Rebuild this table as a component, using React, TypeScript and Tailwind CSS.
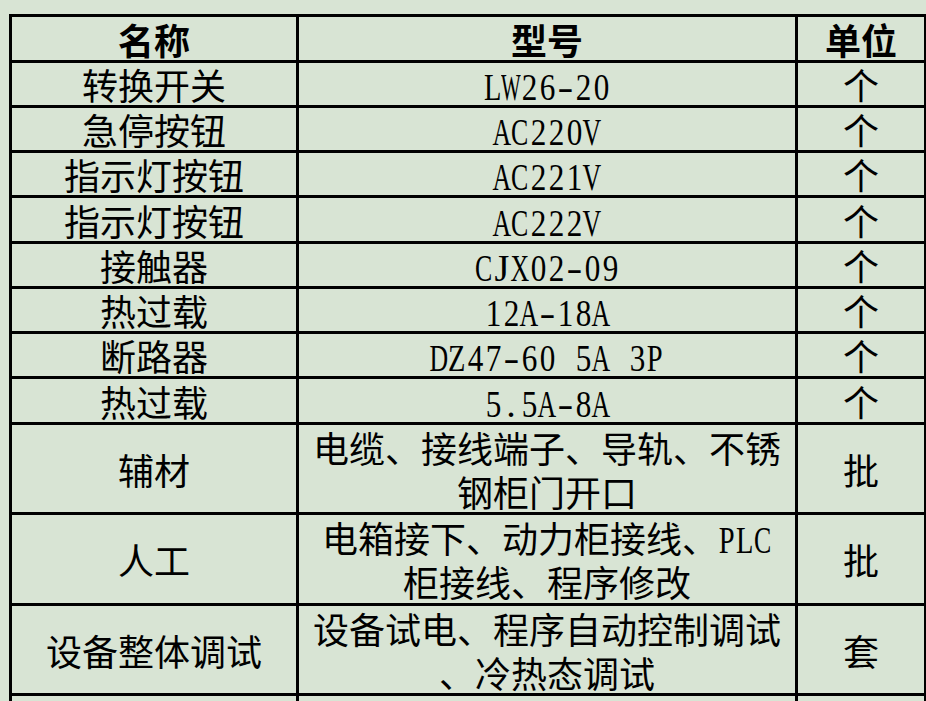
import React from "react";

function sx(c: string): string {
  if (/[0-9]/.test(c)) return "scale-x-[0.82]";
  if (c === "W") return "scale-x-[0.55]";
  if ("AVXDC".includes(c)) return "scale-x-[0.68]";
  if ("LZP".includes(c)) return "scale-x-[0.75]";
  if (c === "-") return "scale-x-[1.25]";
  return "scale-x-100";
}

function L({ t }: { t: string }) {
  return (
    <span className="font-['Liberation_Serif',serif] text-[38px] leading-[36px] align-baseline">
      {t.split("").map((c, i) => (
        <span key={i} className="inline-flex w-[18px] justify-center align-baseline">
          <span className={`inline-block shrink-0 ${sx(c)}`}>{c === " " ? "\u00a0" : c}</span>
        </span>
      ))}
    </span>
  );
}

type Row = { h: string; name: React.ReactNode; model: React.ReactNode; unit: string };

const rows: Row[] = [
  { h: "h-[45px]", name: "转换开关", model: <L t="LW26-20" />, unit: "个" },
  { h: "h-[45px]", name: "急停按钮", model: <L t="AC220V" />, unit: "个" },
  { h: "h-[45px]", name: "指示灯按钮", model: <L t="AC221V" />, unit: "个" },
  { h: "h-[46px]", name: "指示灯按钮", model: <L t="AC222V" />, unit: "个" },
  { h: "h-[45px]", name: "接触器", model: <L t="CJX02-09" />, unit: "个" },
  { h: "h-[45px]", name: "热过载", model: <L t="12A-18A" />, unit: "个" },
  { h: "h-[45px]", name: "断路器", model: <L t="DZ47-60 5A 3P" />, unit: "个" },
  { h: "h-[46px]", name: "热过载", model: <L t="5.5A-8A" />, unit: "个" },
  {
    h: "h-[90px]",
    name: "辅材",
    model: (
      <>
        <span className="whitespace-nowrap">电缆、接线端子、导轨、不锈</span>
        <br />
        <span className="whitespace-nowrap">钢柜门开口</span>
      </>
    ),
    unit: "批",
  },
  {
    h: "h-[91px]",
    name: "人工",
    model: (
      <>
        <span className="whitespace-nowrap">
          电箱接下、动力柜接线、<L t="PLC" />
        </span>
        <br />
        <span className="whitespace-nowrap">柜接线、程序修改</span>
      </>
    ),
    unit: "批",
  },
  {
    h: "h-[90px]",
    name: "设备整体调试",
    model: (
      <>
        <span className="whitespace-nowrap">设备试电、程序自动控制调试</span>
        <br />
        <span className="whitespace-nowrap">、冷热态调试</span>
      </>
    ),
    unit: "套",
  },
  { h: "h-[45px]", name: "", model: "", unit: "" },
];

const cell = "flex items-center justify-center text-center border-r-[3px] border-b-[3px] border-black";

export default function App() {
  return (
    <div className="w-[926px] h-[701px] overflow-hidden bg-[#d8e4d4] text-black font-['Noto_Sans_CJK_SC','Noto_Sans',sans-serif]">
      <div className="ml-[9px] mt-[14px] w-[918px] border-l-[3px] border-t-[3px] border-black text-[36px]">
        <div className="flex h-[46px] font-bold leading-[40px]">
          <div className={`${cell} w-[287px]`}>名称</div>
          <div className={`${cell} w-[499px]`}>型号</div>
          <div className={`${cell} w-[129px]`}>单位</div>
        </div>
        {rows.map((r, i) => (
          <div key={i} className={`flex ${r.h} leading-[44px]`}>
            <div className={`${cell} w-[287px]`}>{r.name}</div>
            <div className={`${cell} w-[499px]`}>
              <div>{r.model}</div>
            </div>
            <div className={`${cell} w-[129px]`}>{r.unit}</div>
          </div>
        ))}
      </div>
    </div>
  );
}
